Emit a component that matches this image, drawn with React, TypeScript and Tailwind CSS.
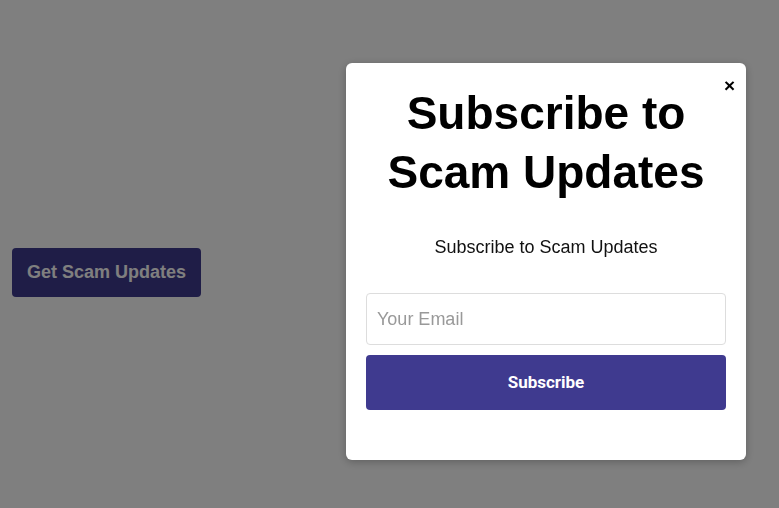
import React, { useState } from "react";

const SubscribeModal = ({ onClose }: { onClose: () => void }) => {
  const [email, setEmail] = useState("");

  return (
    <div className="fixed inset-0 bg-black/50 pl-[346px] pt-[63px]">
      <div className="relative w-[400px] h-[397px] rounded-md bg-white px-5 pt-[21px] text-center shadow-[0_2px_8px_rgba(0,0,0,0.25)]">
        <button
          className="absolute right-[11px] top-[12px] text-[19px] font-bold leading-[22px] text-black"
          onClick={onClose}
        >
          ×
        </button>
        <h1 className="text-[46px] font-bold leading-[59px] text-black">
          Subscribe to Scam Updates
        </h1>
        <p className="mt-[35px] text-[18px] leading-[21px] text-[#111]">Subscribe to Scam Updates</p>
        <form
          className="mt-[35px] flex flex-col gap-[10px]"
          onSubmit={(e) => {
            e.preventDefault();
          }}
        >
          <input
            type="email"
            value={email}
            onChange={(e) => setEmail(e.target.value)}
            placeholder="Your Email"
            className="h-[52px] w-full rounded border border-[#dddddd] px-[10px] text-[18px] text-black outline-none placeholder:text-[#999999]"
          />
          <button
            type="submit"
            className="h-[55px] w-full rounded bg-[#3f3a8f] text-[17px] font-bold text-white [font-family:Roboto,sans-serif]"
          >
            Subscribe
          </button>
        </form>
      </div>
    </div>
  );
};

export default function App() {
  const [open, setOpen] = useState(true);

  return (
    <div className="min-h-screen bg-white [font-family:'Liberation_Sans',Arial,sans-serif]">
      <div className="pl-3 pt-[248px]">
        <button
          className="h-[49px] rounded bg-[#3f3a8f] px-[15px] text-[18px] font-bold text-white"
          onClick={() => setOpen(true)}
        >
          Get Scam Updates
        </button>
      </div>
      {open && <SubscribeModal onClose={() => setOpen(false)} />}
    </div>
  );
}
